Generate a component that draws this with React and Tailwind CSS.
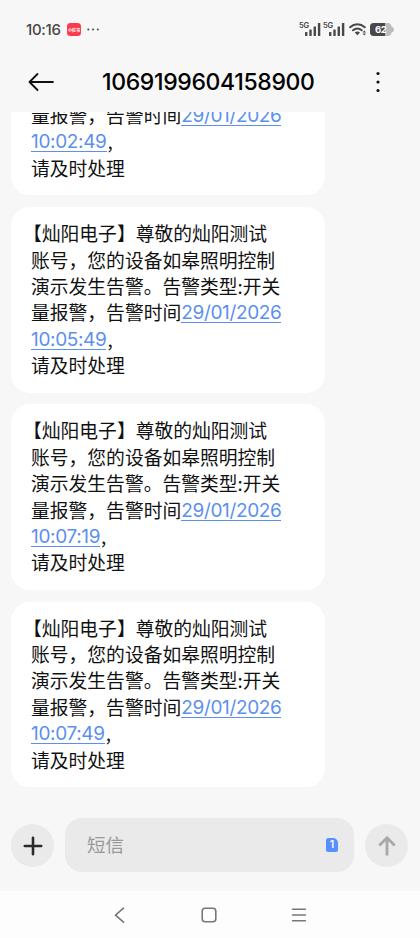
import React from 'react';

const messages = [
  { id: 1, date: '29/01/2026', time: '10:02:49' },
  { id: 2, date: '29/01/2026', time: '10:05:49' },
  { id: 3, date: '29/01/2026', time: '10:07:19' },
  { id: 4, date: '29/01/2026', time: '10:07:49' },
];

function Signal() {
  return (
    <div className="flex items-start">
      <span className="w-[10px] text-[7.5px] leading-[8px] font-semibold tracking-[-0.2px]">5G</span>
      <svg className="-ml-[4px] mt-[1px]" width="16" height="13" viewBox="0 0 16 13" fill="#484848">
        <rect x="0" y="9" width="2.4" height="4" rx="0.4" />
        <rect x="4.3" y="6.5" width="2.4" height="6.5" rx="0.4" />
        <rect x="8.6" y="3.5" width="2.4" height="9.5" rx="0.4" />
        <rect x="12.9" y="0" width="2.4" height="13" rx="0.4" />
      </svg>
    </div>
  );
}

function StatusBar() {
  return (
    <div className="h-[52px] shrink-0 pt-[22px] pl-[26px] pr-[26px] flex justify-between text-[#484848]">
      <div className="h-[15px] flex items-center">
        <span className="w-[36px] text-[15px] leading-[15px] font-medium tracking-[-0.3px] whitespace-nowrap">10:16</span>
        <span className="ml-[5px] w-[14px] h-[13px] rounded-[3.5px] bg-[#fb3a4e] text-white text-[4px] leading-none font-bold flex items-center justify-center whitespace-nowrap font-['Noto_Sans_CJK_SC',sans-serif]">小红书</span>
        <svg className="ml-[6px]" width="13" height="3" viewBox="0 0 13 3" fill="#484848">
          <circle cx="1.3" cy="1.5" r="1" />
          <circle cx="6" cy="1.5" r="1" />
          <circle cx="10.8" cy="1.5" r="1" />
        </svg>
      </div>
      <div className="h-[15px] flex items-start">
        <Signal />
        <div className="ml-[2px]">
          <Signal />
        </div>
        <svg className="ml-[4px] mt-[1px]" width="18" height="13" viewBox="0 0 18 13" fill="none">
          <path d="M1 4.2C5.4 .2 11.4 .2 15.8 4.2" stroke="#484848" strokeWidth="2" strokeLinecap="round" />
          <path d="M4 7.3C6.8 4.9 10 4.9 12.8 7.3" stroke="#484848" strokeWidth="1.9" strokeLinecap="round" />
          <path d="M5.8 9.4C7.4 8.3 9.4 8.3 11 9.4L8.4 12.3Z" fill="#484848" />
          <path d="M15.3 7.6L17 9.6H13.6ZM15.3 12.6L17 10.6H13.6Z" fill="#484848" />
        </svg>
        <div className="relative ml-[3px] mt-[1px] w-[24px] h-[13px]">
          <svg width="24" height="13" viewBox="0 0 24 13">
            <path d="M4 0H18C20.3 0 21 1.4 21.6 3.4C23 4 24 5 24 6.5S23 9 21.6 9.6C21 11.6 20.3 13 18 13H4C1.2 13 0 11.6 0 9V4C0 1.4 1.2 0 4 0Z" fill="#bdbdbd" />
            <path d="M4 0H15V13H4C1.2 13 0 11.6 0 9V4C0 1.4 1.2 0 4 0Z" fill="#484848" />
          </svg>
          <span className="absolute left-[5px] top-[2px] text-[9.5px] leading-[10px] font-bold tracking-[-0.4px] text-white">62</span>
        </div>
      </div>
    </div>
  );
}

function Header() {
  return (
    <header className="h-[60px] shrink-0 pl-[28px] pr-[38px] flex items-center">
      <svg width="27" height="20" viewBox="0 0 27 20" fill="none" stroke="#111" strokeWidth="1.8" strokeLinecap="round" strokeLinejoin="round">
        <path d="M25 10H1.5M9.5 2L1.5 10L9.5 18" />
      </svg>
      <h1 className="ml-[47px] text-[23px] leading-[28px] font-medium tracking-[-0.35px] text-black whitespace-nowrap">1069199604158900</h1>
      <svg className="ml-auto" width="8" height="22" viewBox="0 0 8 22" fill="#111">
        <circle cx="4" cy="2.5" r="1.6" />
        <circle cx="4" cy="11" r="1.6" />
        <circle cx="4" cy="19.5" r="1.6" />
      </svg>
    </header>
  );
}

function Bubble({ date, time }) {
  return (
    <div className="w-[314px] shrink-0 rounded-[19px] bg-white pl-[20px] pt-[13px] pb-[14px] font-['Noto_Sans_CJK_SC',sans-serif] text-[18.8px] leading-[26.4px] text-[#111] whitespace-nowrap">
      <p className="-indent-[8px]">【灿阳电子】尊敬的灿阳测试</p>
      <p>账号，您的设备如皋照明控制</p>
      <p>演示发生告警。告警类型:开关</p>
      <p className="flex">
        量报警，告警时间
        <Stamp>{date}</Stamp>
      </p>
      <p className="flex">
        <Stamp>{time}</Stamp>,
      </p>
      <p>请及时处理</p>
    </div>
  );
}

function Stamp({ children }) {
  return (
    <a className="h-[24px] mr-[1px] border-b border-[#5b8ff0] font-['Inter',sans-serif] text-[19px] leading-[27.5px] tracking-[-0.35px] text-[#5b8ff0]">
      {children}
    </a>
  );
}

function Composer() {
  return (
    <div className="h-[104px] shrink-0 pt-[31px] pl-[11px] pr-[12px] flex items-start gap-[11px]">
      <button className="mt-[6px] w-[43px] h-[43px] shrink-0 rounded-full bg-[#eaeaea] flex items-center justify-center">
        <svg width="20" height="20" viewBox="0 0 20 20" stroke="#2b2b2b" strokeWidth="2.6" strokeLinecap="round">
          <path d="M10 1.8V18.2M1.8 10H18.2" />
        </svg>
      </button>
      <div className="h-[54px] flex-1 rounded-[17px] bg-[#eaeaea] pl-[22px] pr-[16px] flex items-center justify-between">
        <span className="-mt-[1px] font-['Noto_Sans_CJK_SC',sans-serif] text-[18.5px] leading-[27px] text-[#999]">短信</span>
        <span className="w-[12px] h-[14px] rounded-[2.5px] rounded-tr-[5px] bg-[#5490ff] text-white text-[10.5px] leading-[14px] font-semibold text-center">1</span>
      </div>
      <button className="mt-[6px] w-[43px] h-[43px] shrink-0 rounded-full bg-[#eaeaea] flex items-center justify-center">
        <svg width="20" height="20" viewBox="0 0 20 20" fill="none" stroke="#a8a8a8" strokeWidth="2.8">
          <path d="M10 19.5V2M2.3 9.5L10 1.8L17.7 9.5" />
        </svg>
      </button>
    </div>
  );
}

function NavBar() {
  return (
    <nav className="h-[47px] shrink-0 bg-[#fdfdfd] pl-[113px] pr-[113px] flex items-center justify-between text-[#777]">
      <svg className="mt-[1px]" width="13" height="16" viewBox="0 0 13 16" fill="none" stroke="currentColor" strokeWidth="1.6" strokeLinecap="round" strokeLinejoin="round">
        <path d="M10.5 1.2L2.5 8.2L10.5 15.2" />
      </svg>
      <svg className="mt-[1px]" width="16" height="16" viewBox="0 0 16 16" fill="none" stroke="currentColor" strokeWidth="1.6">
        <rect x="1.2" y="1.2" width="13.6" height="13.6" rx="3" />
      </svg>
      <svg className="mt-[1px]" width="16" height="14" viewBox="0 0 16 14" stroke="currentColor" strokeWidth="1.6" strokeLinecap="round">
        <path d="M1.6 1.2H14.4M1.6 7H14.4M1.6 12.8H14.4" />
      </svg>
    </nav>
  );
}

export default function App() {
  return (
    <div className="w-[420px] h-[938px] bg-[#f7f7f7] flex flex-col overflow-hidden font-['Inter',sans-serif]">
      <StatusBar />
      <Header />
      <main className="flex-1 min-h-0 overflow-hidden pl-[11px] flex flex-col justify-end gap-[11.8px]">
        {messages.map(m => (
          <Bubble key={m.id} date={m.date} time={m.time} />
        ))}
      </main>
      <Composer />
      <NavBar />
    </div>
  );
}
